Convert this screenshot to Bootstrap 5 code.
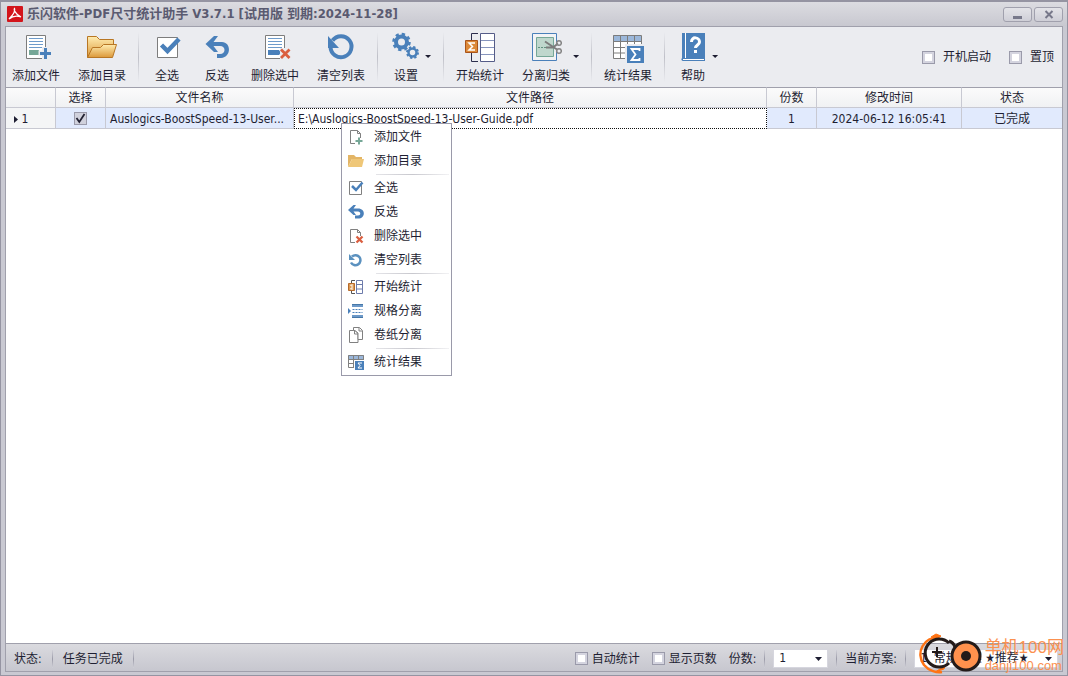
<!DOCTYPE html>
<html lang="zh-CN">
<head>
<meta charset="utf-8">
<meta name="viewport" content="width=device-width, initial-scale=1">
<title>乐闪软件-PDF尺寸统计助手</title>
<link href="https://cdn.jsdelivr.net/npm/bootstrap@5.3.0/dist/css/bootstrap.min.css" rel="stylesheet">
<style>
:root{--ink:#1e1e32;--line:#a0a0ac;--blue:#4a80ba}
body{font:12px/16px "DejaVu Sans Condensed","Noto Sans CJK SC",sans-serif;color:var(--ink);background:#c9c9d2}
.app-window{border:1px solid #9594a2;border-top-width:2px;padding:0 4px 3px;background:#c9c9d2}
.title-bar{height:24px;padding:0 0 0 2px;background:linear-gradient(#dcdce1,#c8c8d0);margin:0 -4px}
.title-bar h1{font-size:13px;line-height:18px;font-weight:700;color:#5a5a70}
.win-btns{gap:2px}
.win-btn{width:29px;height:15px;border:1px solid #a0a0ad;border-radius:3px;background:linear-gradient(#e3e3e8,#cfcfd7)}
.app-frame{border:1px solid var(--line);background:#fff}
.tool-bar{height:60px;background:#ebecf0;gap:6px}
.tool-btn{border:0;background:none;color:inherit;padding:4px 6px 0;gap:3px;height:58px}
.tool-face{min-width:32px;gap:4px}
.tool-sep,.status-sep{width:1px;height:50px;background:linear-gradient(#ebecf0,#bfc0c8 50%,#ebecf0)}
.status-sep{height:18px;background:linear-gradient(#d0d0d8,#9b9ba8 50%,#d0d0d8)}
.caret-down{width:6px;height:3px;background:var(--ink);clip-path:polygon(0 0,100% 0,50% 100%);margin-top:23px}
.tool-options{gap:18px}
.tool-options label{gap:8px}
.tick-box{appearance:none;width:13px;height:13px;margin:0;border:1px solid #9a9aaa;background:#fff;box-shadow:inset 0 0 0 2px #d4d4df}
.tick-box:checked{box-shadow:none;background:#d0d1dc url("data:image/svg+xml,%3Csvg xmlns='http://www.w3.org/2000/svg' viewBox='0 0 11 11'%3E%3Cpath d='M1.500 5l2.800 4L9.500 1' fill='none' stroke='%23222233' stroke-width='1.800'/%3E%3C/svg%3E")}
.file-table{table-layout:fixed;border-collapse:separate;border-spacing:0}
.file-table th,.file-table td{height:21px;padding:0 4px;line-height:18px;text-align:center;font-weight:400;border-right:1px solid #c8c9d2;border-bottom:1px solid #c8c9d2;white-space:nowrap;overflow:hidden;text-overflow:ellipsis}
.file-table td{padding-top:2px}
.file-table th{padding-top:1px;background:linear-gradient(#fbfbfb,#f0f1f3);border-top:1px solid var(--line)}
.file-table th:last-child,.file-table td:last-child{border-right:0}
.file-table td{background:#e1eafd}
.file-table .row-head{background:#f4f5f6}
.file-table .path-cell{background:#fff;border:1px dotted #111;padding:0 3px}
.file-table .txt{text-align:left}
.col-narrow{width:50px}
.col-name{width:188px}
.col-time{width:145px}
.col-state{width:100px}
.row-arrow{display:inline-block;width:4px;height:7px;background:var(--ink);clip-path:polygon(0 0,100% 50%,0 100%)}
.status-bar{height:28px;padding-top:2px;border-top:1px solid var(--line);background:linear-gradient(#dadadf,#c7c7cf)}
.status-info{gap:10px}
.status-tools{gap:8px}
.plain-select{appearance:none;height:19px;border:1px solid #d6d6de;border-radius:0;color:inherit;line-height:17px;padding:0 5px;background:#fff url("data:image/svg+xml,%3Csvg xmlns='http://www.w3.org/2000/svg' width='7' height='4'%3E%3Cpath d='M0 0h7L3.500 4z' fill='%231e1e32'/%3E%3C/svg%3E") no-repeat right 5px center}
.copies{width:55px}
.scheme{width:144px}
.ctx-menu{left:340px;top:121px;width:111px;border:1px solid #9a9aaa;background:#fff;padding:1px 0}
.ctx-item{display:flex;align-items:center;width:100%;height:24px;border:0;background:none;color:inherit;padding:0 6px;gap:10px}
.ctx-sep{height:1px;margin:1px 2px 1px 34px;background:linear-gradient(90deg,#e4e4e8,#c8c8ce 50%,#f2f2f4)}
.site-mark{right:3px;bottom:0;color:#fb9150;font-family:"Liberation Sans","Noto Sans CJK SC",sans-serif;pointer-events:none;gap:2px}
.mark-name{font-size:17px;line-height:18px}
.mark-host{font-size:13px;line-height:18px}
</style>
</head>
<body>
<div class="app-window min-vh-100 d-flex flex-column position-relative">
  <header class="title-bar d-flex align-items-center justify-content-between">
    <div class="d-flex align-items-center gap-1 ps-1">
      <svg width="16" height="16" viewBox="0 0 16 16"><rect width="16" height="16" rx="1" fill="#d3141b"/><path d="M2 13C5 10 9 6 7.500 2.500C6.500 3 8 8 14 11C9 9 5 10.500 2 13" fill="none" stroke="#fff" stroke-width="1.300"/></svg>
      <h1 class="m-0">乐闪软件-PDF尺寸统计助手 V3.7.1 [试用版 到期:2024-11-28]</h1>
    </div>
    <div class="win-btns d-flex pe-1">
      <button class="win-btn p-0 d-flex justify-content-center" aria-label="最小化"><svg width="10" height="13"><path d="M0 9.500h9" stroke="#77788a" stroke-width="3"/></svg></button>
      <button class="win-btn p-0 d-flex justify-content-center" aria-label="关闭"><svg width="10" height="13"><path d="M1.500 3l7 7m0-7l-7 7" stroke="#77788a" stroke-width="2"/></svg></button>
    </div>
  </header>
  <main class="app-frame flex-grow-1 d-flex flex-column">
    <div class="tool-bar d-flex align-items-center">
      <button class="tool-btn d-flex"><span class="tool-face d-flex flex-column align-items-center">
        <svg width="32" height="32"><path d="M6.500 3.500h19v23h-19z" fill="#fff" stroke="#7d7d7d"/><path d="M9 6.500h14m-14 3h14m-14 3h14m-14 3h14" stroke="#6e9bcb"/><path d="M9 18h10v5H9z" fill="#76a797"/><path d="M24.500 15v12m-6-6h12" stroke="#ebecf0" stroke-width="5"/><path d="M25.500 16v11m-5.500-5.500h11" stroke="#4a80ba" stroke-width="3"/></svg><span>添加文件</span></span></button>
      <button class="tool-btn d-flex"><span class="tool-face d-flex flex-column align-items-center">
        <svg width="32" height="32"><defs><linearGradient id="gold" x2="0" y2="1"><stop stop-color="#ffecb0"/><stop offset="1" stop-color="#dc9839"/></linearGradient></defs><path d="M1.500 25.500V4.500h9l3 3h14v9" fill="url(#gold)" stroke="#b87624"/><path d="M1.500 25.500l5-10 8 0 3-3h13l-4 13z" fill="url(#gold)" stroke="#b87624"/></svg><span>添加目录</span></span></button>
      <div class="tool-sep"></div>
      <button class="tool-btn d-flex"><span class="tool-face d-flex flex-column align-items-center">
        <svg width="32" height="32"><path d="M6.500 5.500h20v20h-20z" fill="#fff" stroke="#7d7d7d"/><path d="M10.500 13l6 6L28 7" fill="none" stroke="#4a80ba" stroke-width="4.500"/></svg><span>全选</span></span></button>
      <button class="tool-btn d-flex"><span class="tool-face d-flex flex-column align-items-center">
        <svg width="32" height="32"><path d="M4.500 12L13 4h4l-4.500 6H21c9 0 10 15-1 16h-4v-4h3c6 0 6-8 0-8h-6.500L17 20h-4z" fill="#4a80ba"/></svg><span>反选</span></span></button>
      <button class="tool-btn d-flex"><span class="tool-face d-flex flex-column align-items-center">
        <svg width="32" height="32"><path d="M6.500 3.500h19v23h-19z" fill="#fff" stroke="#7d7d7d"/><path d="M9 6.500h14m-14 3h14m-14 3h14m-14 3h14" stroke="#6e9bcb"/><path d="M9 18h11l2 3-2 2H9z" fill="#4a80ba"/><path d="M21 16h11v12H21z" fill="#ebecf0"/><path d="M22 17.500l8.500 8.500m0-8.500L22 26" stroke="#da5f40" stroke-width="2.800"/></svg><span>删除选中</span></span></button>
      <button class="tool-btn d-flex"><span class="tool-face d-flex flex-column align-items-center">
        <svg width="32" height="32"><path d="M7.500 8.500A10.500 10.500 0 1 1 5.500 15" fill="none" stroke="#4a80ba" stroke-width="4"/><path d="M3 4v12h11z" fill="#4a80ba"/></svg><span>清空列表</span></span></button>
      <div class="tool-sep"></div>
      <button class="tool-btn d-flex align-items-start"><span class="tool-face d-flex flex-column align-items-center">
        <svg width="32" height="32"><g fill="none" stroke="#4a80ba"><circle cx="11.500" cy="10" r="5.500" stroke-width="4"/><circle cx="11.500" cy="10" r="8" stroke-width="2.500" stroke-dasharray="3.300 2.983"/><circle cx="22.500" cy="20.500" r="4" stroke-width="2.500"/><circle cx="22.500" cy="20.500" r="5.500" stroke-width="2" stroke-dasharray="2.300 2.020"/></g></svg><span>设置</span></span><span class="caret-down"></span></button>
      <div class="tool-sep"></div>
      <button class="tool-btn d-flex"><span class="tool-face d-flex flex-column align-items-center">
        <svg width="32" height="32"><path d="M14 1.500H7.500v28H14" fill="none" stroke="#2c2d4c"/><path d="M1.500 8.500h12v12h-12z" fill="#dc8939" stroke="#a9541a"/><path d="M11 11H5l3.500 3.500L5 18h6" fill="none" stroke="#fff" stroke-width="1.500"/><path d="M16.500 1.500h14v28h-14z" fill="#fff" stroke="#555c88"/><path d="M17 8.500h13m-13 7h13m-13 7h13" stroke="#8795bd"/></svg><span>开始统计</span></span></button>
      <button class="tool-btn d-flex align-items-start"><span class="tool-face d-flex flex-column align-items-center">
        <svg width="32" height="32"><path d="M2.500 1.500h24v27h-24z" fill="#f2f3f5" stroke="#4a80ba"/><path d="M6.500 5.500h17v19h-17z" fill="#bfd7cd" stroke="#76a797"/><path d="M8 15.500h14" stroke="#62917f" stroke-dasharray="2 1"/><path d="M24 10h8v10h-8z" fill="#ebecf0"/><path d="M15 9.500l12 8M16 15.500h7l5-4" stroke="#7c7c7c" fill="none" stroke-width="2"/><g fill="none" stroke="#858585" stroke-width="1.500"><circle cx="29" cy="11" r="2.300"/><circle cx="29" cy="19" r="2.300"/></g></svg><span>分离归类</span></span><span class="caret-down"></span></button>
      <div class="tool-sep"></div>
      <button class="tool-btn d-flex"><span class="tool-face d-flex flex-column align-items-center">
        <svg width="32" height="32"><path d="M1.500 3.500h28v23h-28z" fill="#fff"/><path d="M1 3h28v6H1z" fill="#9bb7da"/><path d="M1.500 3.500h28v23h-28zm0 6h28m-28 6h28m-28 5.500h28M8.500 3v24m7-24v24m7-24v24" fill="none" stroke="#7c7c7c"/><path d="M13 12h19v19H13z" fill="#ebecf0"/><path d="M15 14h17v17H15z" fill="#4a80ba"/><path d="M27.500 19v-2h-8l4 5.500-4 5.500h8v-2" fill="none" stroke="#fff" stroke-width="1.800"/></svg><span>统计结果</span></span></button>
      <div class="tool-sep"></div>
      <button class="tool-btn d-flex align-items-start"><span class="tool-face d-flex flex-column align-items-center">
        <svg width="32" height="32"><path d="M5 1h23v28H7c-3 0-3-2-2-3z" fill="#4a80ba"/><path d="M8.500 1v25M6 27.500h21" stroke="#fff" fill="none"/><path d="M14.500 10c0-6 8-5 8 0 0 3-4 3-4 6" fill="none" stroke="#fff" stroke-width="3"/><path d="M17 18h3v3h-3z" fill="#fff"/></svg><span>帮助</span></span><span class="caret-down"></span></button>
      <div class="tool-options ms-auto d-flex align-items-center pe-2">
        <label class="d-flex align-items-center"><input type="checkbox" class="tick-box">开机启动</label>
        <label class="d-flex align-items-center"><input type="checkbox" class="tick-box">置顶</label>
      </div>
    </div>
    <table class="file-table w-100">
      <colgroup><col class="col-narrow"><col class="col-narrow"><col class="col-name"><col><col class="col-narrow"><col class="col-time"><col class="col-state"></colgroup>
      <thead><tr><th></th><th>选择</th><th>文件名称</th><th>文件路径</th><th>份数</th><th>修改时间</th><th>状态</th></tr></thead>
      <tbody><tr><td class="row-head txt ps-1"><span class="row-arrow ms-1"></span> 1</td><td class="pt-0"><input type="checkbox" class="tick-box align-middle" aria-label="选择文件" checked></td><td class="txt">Auslogics-BoostSpeed-13-User...</td><td class="txt path-cell">E:\Auslogics-BoostSpeed-13-User-Guide.pdf</td><td>1</td><td>2024-06-12 16:05:41</td><td>已完成</td></tr></tbody>
    </table>
    <footer class="status-bar mt-auto d-flex align-items-center justify-content-between">
      <div class="status-info d-flex align-items-center ps-2"><span>状态:</span><div class="status-sep"></div><span>任务已完成</span><div class="status-sep"></div></div>
      <div class="status-tools d-flex align-items-center pe-1">
        <label class="d-flex align-items-center gap-1 pe-1"><input type="checkbox" class="tick-box">自动统计</label>
        <label class="d-flex align-items-center gap-1 pe-1"><input type="checkbox" class="tick-box">显示页数</label>
        <label for="copies">份数:</label><div class="status-sep"></div>
        <select id="copies" class="plain-select copies"><option>1</option></select><div class="status-sep"></div>
        <label for="scheme">当前方案:</label><div class="status-sep"></div>
        <select id="scheme" class="plain-select scheme"><option>1. 常规方案 ★推荐★</option></select>
      </div>
    </footer>
  </main>

  <div class="ctx-menu position-absolute" role="menu">
    <button class="ctx-item" role="menuitem"><svg width="16" height="16"><path d="M7 14.500H2.500v-13h7l3 3V9" fill="#fff" stroke="#808080"/><path d="M9.500 1.500v3h3" fill="none" stroke="#808080"/><path d="M11 8.500v7m-3.500-3.500h7" stroke="#76a797" stroke-width="2"/></svg>添加文件</button>
    <button class="ctx-item" role="menuitem"><svg width="16" height="16"><path d="M0 14V2h6l2 2h6v2H4z" fill="#e3b566"/><path d="M0 14L4 6h12l-2 8z" fill="#efc778"/></svg>添加目录</button>
    <div class="ctx-sep"></div>
    <button class="ctx-item" role="menuitem"><svg width="16" height="16"><path d="M1.500 1.500h12v13h-12z" fill="#fff" stroke="#808080"/><path d="M4 6l4 4 6.500-7.500" fill="none" stroke="#4a80ba" stroke-width="2.500"/></svg>全选</button>
    <button class="ctx-item" role="menuitem"><svg width="16" height="16"><path d="M0 6l5.500-5H8L5.500 4.500H10c8 0 7.500 10 0 10H7v-3h3c3 0 3-4 0-4H5.500L8 11H5.500z" fill="#4a80ba"/></svg>反选</button>
    <button class="ctx-item" role="menuitem"><svg width="16" height="16"><path d="M7 14.500H2.500v-13h7l3 3V8" fill="#fff" stroke="#808080"/><path d="M9.500 1.500v3h3" fill="none" stroke="#808080"/><path d="M8.500 8.500l6 6m0-6l-6 6" stroke="#da5f40" stroke-width="2.300"/></svg>删除选中</button>
    <button class="ctx-item" role="menuitem"><svg width="16" height="16"><path d="M4 4.500A5 5 0 1 1 3 10.500" fill="none" stroke="#5b91bf" stroke-width="2.500"/><path d="M1 2v6h6z" fill="#5b91bf"/></svg>清空列表</button>
    <div class="ctx-sep"></div>
    <button class="ctx-item" role="menuitem"><svg width="16" height="16"><path d="M7 1.500H3.500v13H7" fill="none" stroke="#555"/><path d="M.5 4.500h6v7h-6z" fill="#dc9952" stroke="#b66b2c"/><path d="M5 6H2.500l2 2-2 2H5" fill="none" stroke="#fff"/><path d="M8.500 1.500h6v13h-6zm0 4h6m-6 4.500h6" fill="#fff" stroke="#6d7bab"/></svg>开始统计</button>
    <button class="ctx-item" role="menuitem"><svg width="16" height="16"><path d="M4 1h11v3H4zm0 11h11v3H4z" fill="#6d99c8"/><path d="M4.500 6.500h10m-10 3h10" stroke="#4a80ba" stroke-dasharray="2 1"/><path d="M0 5l3 3-3 3z" fill="#4a80ba"/><path d="M4 1.500h11M4 14.500h11" stroke="#4778a8"/></svg>规格分离</button>
    <button class="ctx-item" role="menuitem"><svg width="16" height="16"><path d="M1.500 3.500H7l3 3v9H1.500z" fill="#fff" stroke="#808080"/><path d="M5.500.5h6l3 3v9H10V6L7 3.500H5.500z" fill="#fff" stroke="#808080"/><path d="M11 1v3h3M6.500 4v3H10" fill="none" stroke="#808080"/></svg>卷纸分离</button>
    <div class="ctx-sep"></div>
    <button class="ctx-item" role="menuitem"><svg width="16" height="16"><path d="M0 1h16v4H0z" fill="#9bb7da"/><path d="M.5 1.500h15v12H.500zm0 4h15m-15 4h15M5.500 1v13m5-13v13" fill="none" stroke="#808080"/><path d="M6 6h10v10H6z" fill="#fff"/><path d="M7 7h9v9H7z" fill="#4a80ba"/><path d="M14 9h-4l2 2.500-2 2.500h4" fill="none" stroke="#fff"/></svg>统计结果</button>
  </div>

  <div class="site-mark position-absolute d-flex align-items-end">
    <svg width="64" height="42" viewBox="0 0 64 42" fill="none"><path d="M20 5C5 3-4 20 5 32c5 6 13 8 18 7" stroke="#ff7415" stroke-width="2.500"/><path d="M12 4l5-3 5 2-4 3zM16 39l9-3 1-3z" fill="#ff7415" stroke="#ff7415"/><path d="M30 10A14 14 0 1 0 30 30" stroke="#241b19" stroke-width="3"/><path d="M18 14v10m-5-5h10" stroke="#241b19" stroke-width="2"/><circle cx="47" cy="23" r="14" fill="#ff914d" stroke="#241b19" stroke-width="3"/><path d="M30 8c3 1 5 3 6 6" stroke="#241b19" stroke-width="3"/><circle cx="47" cy="23" r="5" fill="#241b19"/></svg>
    <div><div class="mark-name">单机100网</div><div class="mark-host">danji100.com</div></div>
  </div>
</div>
<script src="https://cdn.jsdelivr.net/npm/bootstrap@5.3.0/dist/js/bootstrap.bundle.min.js"></script>
</body>
</html>
